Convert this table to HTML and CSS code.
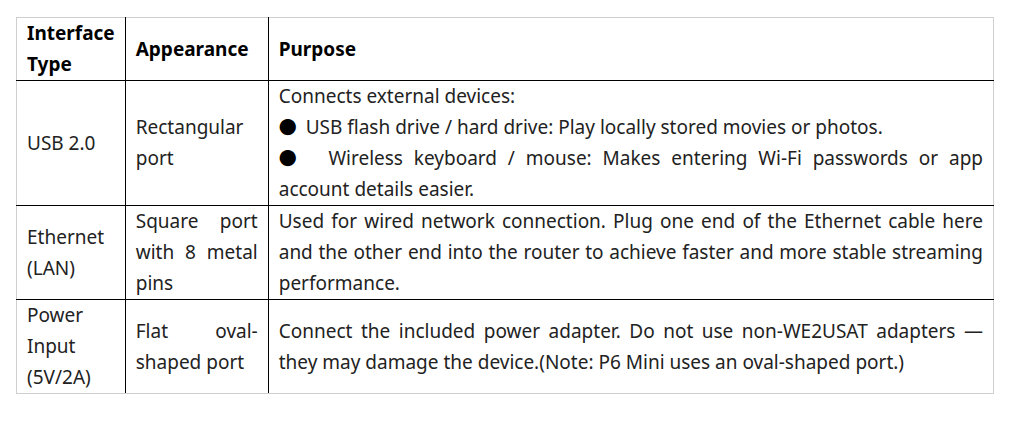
FILE: index.html
```html
<!DOCTYPE html>
<html lang="en">
<head>
  <meta charset="UTF-8">
  <title>Interfaces</title>
  <link rel="stylesheet" href="styles.css">
</head>
<body>

  <table class="spec-table">
    <colgroup>
      <col class="col-type">
      <col class="col-look">
      <col class="col-purpose">
    </colgroup>
    <tr>
      <th>Interface Type</th>
      <th>Appearance</th>
      <th>Purpose</th>
    </tr>
    <tr>
      <td>USB 2.0</td>
      <td>Rectangular port</td>
      <td>
        <p>Connects external devices:</p>
        <p><span class="dot">●</span> USB flash drive / hard drive: Play locally stored movies or photos.</p>
        <p><span class="dot">●</span> &nbsp;Wireless keyboard / mouse: Makes entering Wi-Fi passwords or app account details easier.</p>
      </td>
    </tr>
    <tr>
      <td>Ethernet (LAN)</td>
      <td>Square port with 8 metal pins</td>
      <td>Used for wired network connection. Plug one end of the Ethernet cable here and the other end into the router to achieve faster and more stable streaming performance.</td>
    </tr>
    <tr>
      <td>Power Input (5V/2A)</td>
      <td>Flat oval-shaped port</td>
      <td>Connect the included power adapter. Do not use non-WE2USAT adapters — they may damage the device.(Note: P6 Mini uses an oval-shaped port.)</td>
    </tr>
  </table>

</body>
</html>
```

FILE: styles.css
```css
* {
  box-sizing: border-box;
  margin: 0;
  padding: 0;
}

body {
  background: #fff;
  padding: 17px 16px;
  font-family: "Noto Sans", "Noto Sans CJK SC", sans-serif;
  font-size: 19px;
  line-height: 31px;
  color: #222;
}

.spec-table {
  width: 978px;
  border-collapse: collapse;
}

.col-type { width: 108px; }
.col-look { width: 143px; }

.spec-table th,
.spec-table td {
  border: 1px solid #000;
  padding: 0 10px;
  vertical-align: middle;
  text-align: justify;
}

.spec-table th {
  font-weight: bold;
  color: #000;
  text-align: left;
}

.spec-table td:first-child {
  text-align: left;
}

/* outer frame is a light grey */
.spec-table tr:first-child th { border-top-color: #cfcfcf; }
.spec-table tr:last-child td { border-bottom-color: #cfcfcf; }
.spec-table th:first-child,
.spec-table td:first-child { border-left-color: #cfcfcf; }
.spec-table th:last-child,
.spec-table td:last-child { border-right-color: #cfcfcf; }

.dot {
  color: #000;
  font-size: 18px;
  margin-right: 4px;
}
```
